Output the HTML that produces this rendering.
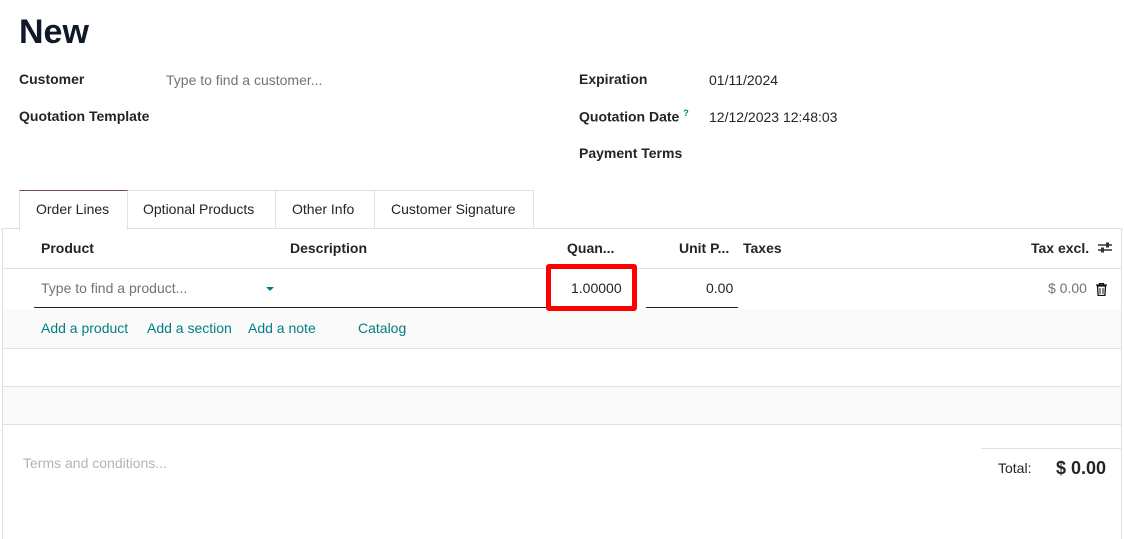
<!DOCTYPE html><html><head><style>
body{margin:0;width:1124px;height:539px;background:#fff;font-family:"Liberation Sans",sans-serif;color:#212529;position:relative;overflow:hidden;font-size:14px}
.a{position:absolute;white-space:nowrap}
.b{font-weight:bold}
.l{color:#017e84}
.hl{position:absolute;left:2px;right:2px;height:1px;background:#dee2e6}
</style></head><body>
<div class="a b" style="left:19px;top:13px;font-size:34px;color:#111827">New</div>
<div class="a b" style="left:19px;top:71px">Customer</div>
<div class="a" style="left:166px;top:72px;color:#6c757d">Type to find a customer...</div>
<div class="a b" style="left:19px;top:108px">Quotation Template</div>
<div class="a b" style="left:579px;top:71px">Expiration</div>
<div class="a" style="left:709px;top:72px">01/11/2024</div>
<div class="a b" style="left:579px;top:108px">Quotation Date <sup style="color:#017e84;font-size:9px">?</sup></div>
<div class="a" style="left:709px;top:109px">12/12/2023 12:48:03</div>
<div class="a b" style="left:579px;top:145px">Payment Terms</div>
<div class="a" style="left:19px;top:190px;width:107px;height:39px;border:1px solid #dee2e6;border-top:1px solid #714b67;border-bottom:none;background:#fff;z-index:2"></div>
<div class="a" style="left:126px;top:190px;width:407px;height:37px;border:1px solid #dee2e6;border-left:none"></div>
<div class="a" style="left:275px;top:190px;width:1px;height:38px;background:#dee2e6"></div>
<div class="a" style="left:374px;top:190px;width:1px;height:38px;background:#dee2e6"></div>
<div class="a" style="left:36px;top:201px;z-index:3">Order Lines</div>
<div class="a" style="left:143px;top:201px">Optional Products</div>
<div class="a" style="left:292px;top:201px">Other Info</div>
<div class="a" style="left:391px;top:201px">Customer Signature</div>
<div class="hl" style="top:228px"></div>
<div class="a" style="left:2px;top:228px;width:1px;height:311px;background:#dee2e6"></div>
<div class="a" style="right:2px;top:228px;width:1px;height:311px;background:#dee2e6"></div>
<div class="a b" style="left:41px;top:240px">Product</div>
<div class="a b" style="left:290px;top:240px">Description</div>
<div class="a b" style="left:567px;top:240px">Quan...</div>
<div class="a b" style="left:679px;top:240px">Unit P...</div>
<div class="a b" style="left:743px;top:240px">Taxes</div>
<div class="a b" style="left:1031px;top:240px">Tax excl.</div>
<svg class="a" style="left:1098px;top:241px" width="14" height="13"><path d="M0 4h14M0 9h14" stroke="#333" stroke-width="1.5"/><rect x="8" y="1.5" width="3" height="5" fill="#333"/><rect x="3" y="6.5" width="3" height="5" fill="#333"/></svg>
<div class="hl" style="top:268px"></div>
<div class="a" style="left:41px;top:280px;color:#6c757d">Type to find a product...</div>
<div class="a" style="left:266px;top:287px;border:4px solid transparent;border-top:4px solid #017e84"></div>
<div class="a" style="left:34px;top:307px;width:512px;height:1px;background:#212529"></div>
<div class="a" style="left:646px;top:307px;width:92px;height:1px;background:#212529"></div>
<div class="a" style="left:3px;right:3px;top:309px;height:39px;background:#fafafa"></div>
<div class="a" style="left:546px;top:264px;width:81px;height:37px;border:5px solid #f00;border-radius:3px;z-index:4"></div>
<div class="a" style="left:571px;top:280px">1.00000</div>
<div class="a" style="left:706px;top:280px">0.00</div>
<div class="a" style="left:1048px;top:280px;color:#6c757d">$ 0.00</div>
<svg class="a" style="left:1096px;top:283px" width="11" height="13"><path d="M0 2h11M3.5 2V0.5h4V2M1.5 3h8l-.6 9.5h-6.8z" fill="none" stroke="#111" stroke-width="1.3"/><path d="M4 5v6M7 5v6" stroke="#111"/></svg>
<div class="a l" style="left:41px;top:320px">Add a product</div>
<div class="a l" style="left:147px;top:320px">Add a section</div>
<div class="a l" style="left:248px;top:320px">Add a note</div>
<div class="a l" style="left:358px;top:320px">Catalog</div>
<div class="hl" style="top:348px"></div>
<div class="hl" style="top:386px"></div>
<div class="a" style="left:3px;right:3px;top:387px;height:37px;background:#fafafa"></div>
<div class="hl" style="top:424px"></div>
<div class="a" style="left:23px;top:455px;color:#adb5bd">Terms and conditions...</div>
<div class="a" style="left:981px;top:448px;width:140px;height:1px;background:#dee2e6"></div>
<div class="a" style="left:998px;top:460px">Total:</div>
<div class="a b" style="left:1056px;top:458px;font-size:18px">$ 0.00</div>
</body></html>
